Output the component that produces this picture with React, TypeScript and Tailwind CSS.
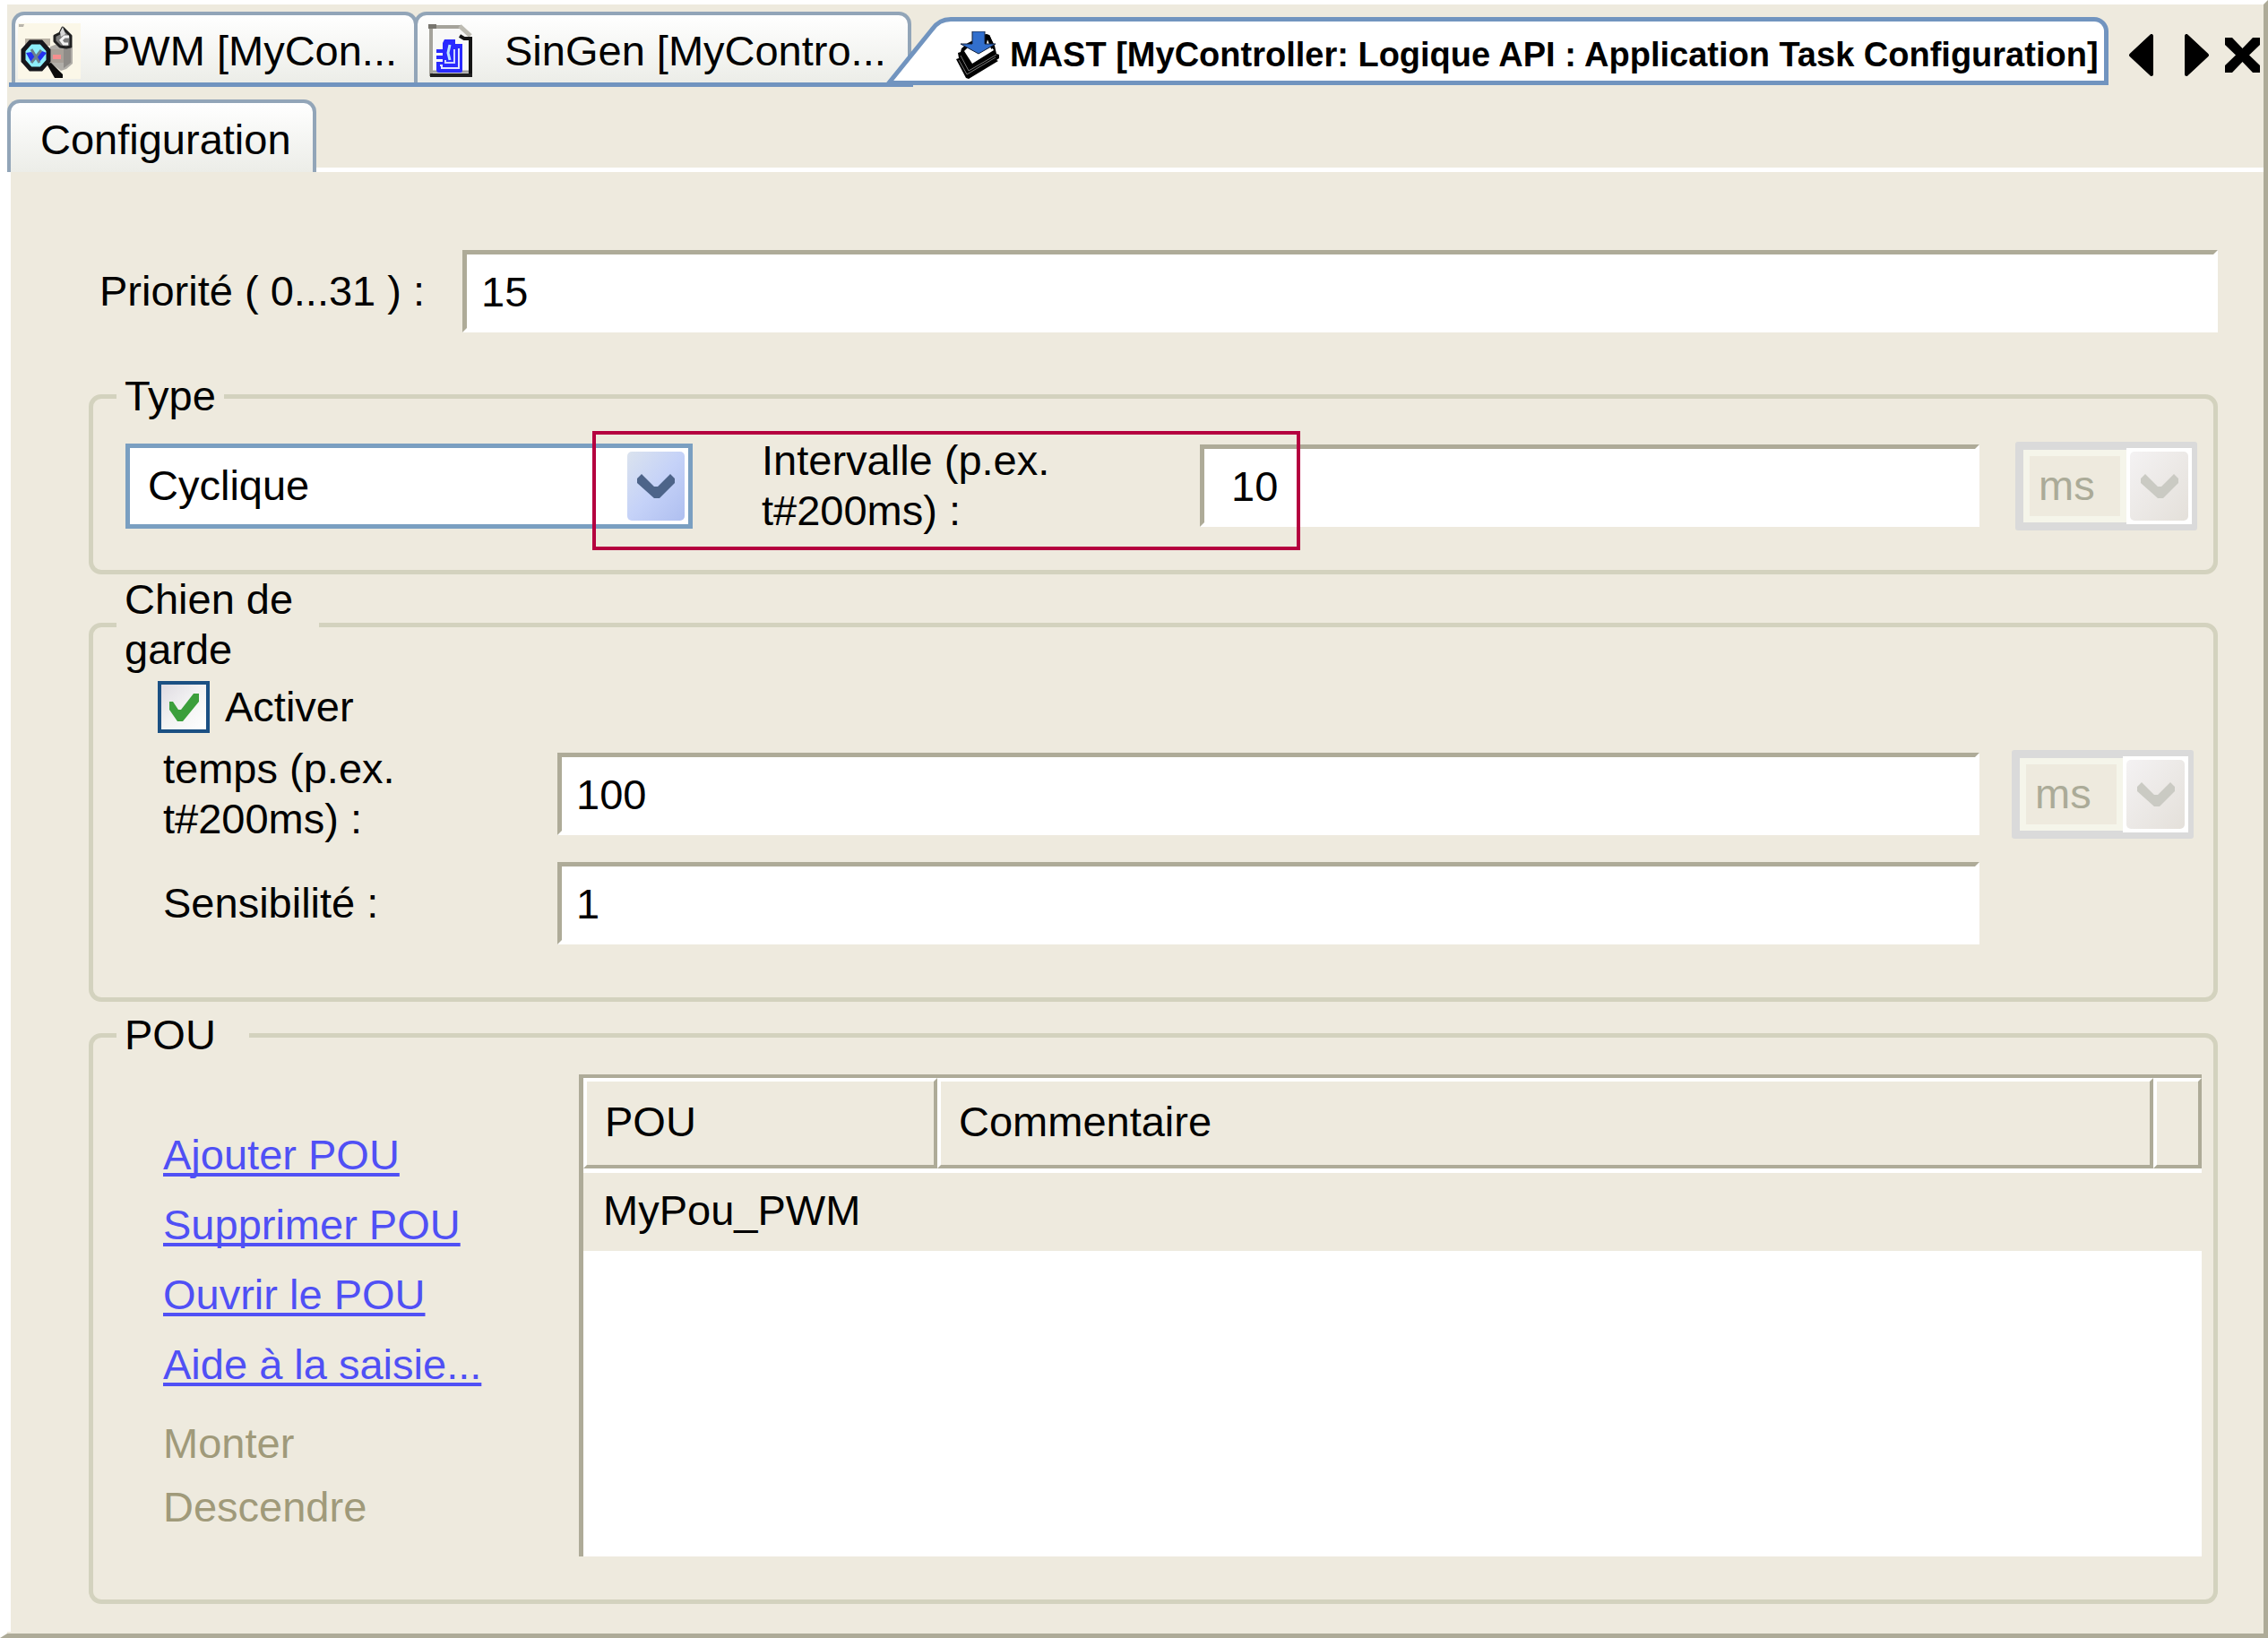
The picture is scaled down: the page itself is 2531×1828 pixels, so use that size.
import { ReactNode, useState } from 'react';

const actions = ['Ajouter POU', 'Supprimer POU', 'Ouvrir le POU', 'Aide à la saisie...'];
const disabledActions = ['Monter', 'Descendre'];
const pous = [{ name: 'MyPou_PWM', comment: '' }];

const fieldClass =
  'h-[92px] min-w-0 border-[5px] border-t-[#aeab98] border-l-[#aeab98] border-r-white border-b-white bg-white outline-none';

function VisualizationIcon() {
  return (
    <svg width="70" height="62" viewBox="0 0 70 62" aria-hidden="true">
      <rect width="70" height="62" fill="#fbf7e8" />
      <path d="M1 1h6l-1 3H1z" fill="#b9b5ac" />
      <path d="M8 17h28v8H8z" fill="#bab3a6" />
      <path d="M36 26l8-3h15l2 4v18l-7 6-6 2-12-9z" fill="#b1aea8" />
      <path d="M51 28l8-2v18l-8 6z" fill="#8f8c88" />
      <path d="M37 29h14v15H37z" fill="#a8a098" />
      <path d="M39 35h9v5h-9z" fill="#f78f8f" />
      <path d="M50 5l9 9v12l-5 1-7-1-6-6v-6l6-3z" fill="#7d7d7d" stroke="#202020" strokeWidth="3" strokeLinejoin="round" />
      <path d="M50 4l3 8-5 3-1-5z" fill="#d8d8d8" />
      <path d="M57 15h-5l-4 4 3 4h5" fill="none" stroke="#f3f3f3" strokeWidth="3" />
      <path d="M14 21h12l8 9v12l-8 9H14l-8-9V30z" fill="#8deefb" stroke="#16161c" strokeWidth="5" />
      <path d="M9 33l6-1 5 5 7-6 5 2-8 10-3-4-6 5z" fill="#2431f0" />
      <path d="M15 29l9 15M26 30L15 44" stroke="#6b7f8c" strokeWidth="3" />
      <path d="M32 45l5-1 13 13v4h-9z" fill="#0c0c0c" />
    </svg>
  );
}

function FunctionBlockIcon() {
  return (
    <svg width="51" height="61" viewBox="0 0 51 61" aria-hidden="true">
      <path d="M2 2h34l13 13v44H2z" fill="#f8f8f7" />
      <path d="M3 59V4h33" fill="none" stroke="#a5a39b" strokeWidth="4" />
      <path d="M0 1h9v5H0z" fill="#77756e" />
      <path d="M35 3l12 11" stroke="#bdbbb2" strokeWidth="5" />
      <path d="M35 14l5 3h7v41" fill="none" stroke="#151515" strokeWidth="4" />
      <path d="M2 58h47" stroke="#202020" strokeWidth="4" />
      <path d="M5 54h40" stroke="#a0a0a0" strokeWidth="3" />
      <path d="M18 18h12v5h8v30q0 2-2 2H12q-3 0-3-3v-9h7v-3H9v-4h7v-3H9v-4h7v-7z" fill="#2a2aff" />
      <path d="M13 47h2v3h19V28" fill="none" stroke="#dfe4ff" strokeWidth="2" />
      <path d="M19 41v3h10V29" fill="none" stroke="#cfd6ff" strokeWidth="2" />
      <path d="M24 24l-2 9 2 8" fill="none" stroke="#bfe6ff" strokeWidth="3" />
    </svg>
  );
}

function TaskIcon() {
  return (
    <svg width="48" height="53" viewBox="0 0 48 53" aria-hidden="true">
      <path d="M0 31l3-1-1-6 3-1 1-4 7-6 20-10 4 1 6 12 2 9 3 1v4l-3 2 2 1-33 20-3-1z" fill="#000" />
      <path d="M9 22l4-4h20l2-9 7 12-24 15z" fill="#fff" />
      <path d="M33 5l3 1 5 13" fill="none" stroke="#000" strokeWidth="4" />
      <path d="M5 27l9 17 31-18M3 32l9 16 32-19" fill="none" stroke="#777" strokeWidth="1" />
      <path d="M18 0h14v14h12L25 25 5 14h13z" fill="#326fcd" stroke="#14233c" strokeWidth="1" />
    </svg>
  );
}

function Chevron({ className }: { className: string }) {
  return (
    <svg width="42" height="27" viewBox="0 0 42 27" className={className} aria-hidden="true">
      <path d="M5 0l14 14h4L37 0l5 5v5L25 27h-6L0 10V5z" fill="currentColor" />
    </svg>
  );
}

function UnitSelect({ label }: { label: string }) {
  return (
    <div className="relative h-[99px] w-[203px] shrink-0 rounded-[3px] border-[9px] border-[#dadada] bg-[#f5f5ea]">
      <select
        aria-label={label}
        disabled
        className="block h-full w-[115px] appearance-none border-[7px] border-[#f5f5ea] bg-[#eeeade] pb-px pl-[10px] text-[#abab98] opacity-100"
      >
        <option>ms</option>
      </select>
      <span className="pointer-events-none absolute -inset-y-[2px] -right-[3px] flex w-[73px] bg-white p-1">
        <span className="flex flex-1 items-center justify-center rounded-[5px] bg-linear-to-br from-[#f4f2f3] to-[#e4e0da]">
          <Chevron className="text-[#cacac3]" />
        </span>
      </span>
    </div>
  );
}

function Group({ title, legendClass, className, children }: {
  title: string;
  legendClass?: string;
  className: string;
  children: ReactNode;
}) {
  return (
    <fieldset className={`min-w-0 rounded-[14px] border-[5px] border-[#d3d2be] pl-[26px] ${className}`}>
      <legend className={`px-[9px] ${legendClass ?? ''}`}>{title}</legend>
      {children}
    </fieldset>
  );
}

function TabBar() {
  return (
    <nav className="flex h-[106px] items-start pt-2 pr-1 pl-[2px]">
      <div className="flex border-b-[5px] border-[#7194bf] pr-[2px] pl-[3px]">
        <button className="flex h-[79px] w-[453px] items-center gap-6 rounded-t-[14px] border-4 border-b-0 border-[#92a5b8] bg-linear-to-b from-white to-[#ecede8] pt-1 pl-[3px] whitespace-nowrap">
          <VisualizationIcon />
          PWM [MyCon...
        </button>
        <button className="-ml-1 flex h-[79px] w-[555px] items-center gap-[34px] rounded-t-[14px] border-4 border-b-0 border-[#92a5b8] bg-linear-to-b from-white to-[#ecede8] pt-1 pl-3 whitespace-nowrap">
          <FunctionBlockIcon />
          SinGen [MyContro...
        </button>
      </div>
      <button className="relative mt-[6px] -ml-[30px] flex h-[76px] min-w-0 flex-1">
        <svg width="72" height="76" viewBox="0 0 72 76" className="shrink-0" aria-hidden="true">
          <path d="M3 73.500L51 14Q59 2.500 72 2.500V73.500z" fill="#fff" />
          <path d="M72 73.500H3L51 14Q59 2.500 72 2.500" fill="none" stroke="#7194bf" strokeWidth="5" />
        </svg>
        <span className="flex h-full flex-1 items-center gap-3 rounded-tr-[16px] border-[5px] border-l-0 border-[#7194bf] bg-white pt-2 pl-[6px] text-[38px] font-bold whitespace-nowrap">
          <TaskIcon />
          MAST [MyController: Logique API : Application Task Configuration]
        </span>
      </button>
      <div className="flex h-24 items-center pl-[23px]">
        <button aria-label="Onglet précédent" className="mr-[35px]">
          <svg width="27" height="47" viewBox="0 0 27 47">
            <path d="M2 23.500L25 2V45z" stroke="#000" strokeWidth="4" strokeLinejoin="round" />
          </svg>
        </button>
        <button aria-label="Onglet suivant" className="mr-[18px]">
          <svg width="27" height="47" viewBox="0 0 27 47">
            <path d="M25 23.500L2 2V45z" stroke="#000" strokeWidth="4" strokeLinejoin="round" />
          </svg>
        </button>
        <button aria-label="Fermer">
          <svg width="39" height="39" viewBox="0 0 39 39">
            <path d="M0 0h8l11.500 12L31 0h8v8L27 19.500 39 31v8h-8L19.500 27 8 39H0v-8l12-11.500L0 8z" />
          </svg>
        </button>
      </div>
    </nav>
  );
}

export default function App() {
  const [enabled, setEnabled] = useState(true);

  return (
    <div className="min-h-screen border-t-[5px] border-r-[5px] border-b-[5px] border-l-8 border-t-white border-r-[#aeab98] border-b-[#aeab98] border-l-white bg-[#eeeade] font-['Liberation_Sans',Arial,sans-serif] text-[47px] leading-[56px] text-black">
      <TabBar />

      <div className="flex items-end">
        <button className="h-[81px] w-[345px] rounded-t-[14px] border-4 border-b-0 border-[#92a5b8] bg-linear-to-b from-white to-[#ecede8] pt-1 pl-[33px] text-left">
          Configuration
        </button>
        <div className="h-[5px] flex-1 bg-white" />
      </div>

      <main className="border-l-4 border-white pt-[87px] pr-[51px] pb-[31px] pl-[87px]">
        <div className="flex items-center pl-3">
          <label htmlFor="priority" className="w-[405px] shrink-0">Priorité ( 0...31 ) :</label>
          <input id="priority" defaultValue="15" className={`${fieldClass} flex-1 pl-4`} />
        </div>

        <Group title="Type" className="mt-[43px] pt-4 pr-[18px] pb-[38px]">
          <div className="relative ml-[10px] flex items-center">
            <div className="relative mr-[77px] w-[633px] shrink-0">
              <select
                aria-label="Type"
                className="block h-[95px] w-full appearance-none border-[5px] border-[#7a9fc1] bg-white pb-px pl-5 outline-none"
              >
                <option>Cyclique</option>
              </select>
              <span className="pointer-events-none absolute inset-y-[9px] right-[9px] flex w-16 items-center justify-center rounded-[5px] bg-linear-to-br from-[#dbe3ee] via-[#c5d2f8] to-[#afbff0]">
                <Chevron className="text-[#4d6489]" />
              </span>
            </div>
            <label htmlFor="interval" className="w-[489px] shrink-0">
              Intervalle (p.ex.
              <br />
              t#200ms) :
            </label>
            <input id="interval" defaultValue="10" className={`${fieldClass} mr-10 flex-1 pl-[30px]`} />
            <UnitSelect label="Unité de l'intervalle" />
            <div className="pointer-events-none absolute -top-[5px] left-[521px] h-[133px] w-[790px] border-4 border-[#b5003f]" />
          </div>
        </Group>

        <Group title="Chien de garde" legendClass="w-[226px]" className="pt-[7px] pr-[22px] pb-[59px]">
          <div className="mb-3 ml-[46px] flex items-center">
            <span className="relative mr-[17px] size-[58px]">
              <input
                id="watchdog"
                type="checkbox"
                checked={enabled}
                onChange={(e) => setEnabled(e.target.checked)}
                className="block size-full appearance-none border-4 border-[#1b5083] bg-linear-to-br from-[#dfdbe2] via-[#f3f3f3] to-white"
              />
              {enabled && (
                <svg viewBox="0 0 58 58" className="pointer-events-none absolute inset-0" aria-hidden="true">
                  <path d="M13 23h4l6 9h3L40 14h6v9L28 45h-6l-9-13z" fill="#3c9f3c" />
                </svg>
              )}
            </span>
            <label htmlFor="watchdog">Activer</label>
          </div>
          <div className="ml-[52px] grid grid-cols-[440px_1fr_239px] items-center gap-y-5">
            <label htmlFor="time">
              temps (p.ex.
              <br />
              t#200ms) :
            </label>
            <input id="time" defaultValue="100" className={`${fieldClass} pl-4`} />
            <div className="pl-9">
              <UnitSelect label="Unité du temps" />
            </div>
            <label htmlFor="sensitivity">Sensibilité :</label>
            <input id="sensitivity" defaultValue="1" className={`${fieldClass} pl-4`} />
          </div>
        </Group>

        <Group title="POU" legendClass="w-[148px]" className="mt-[9px] pt-4 pr-[13px] pb-12">
          <div className="flex">
            <div className="w-[516px] shrink-0 pt-[62px] pl-[52px]">
              <ul className="flex flex-col gap-[22px]">
                {actions.map((action) => (
                  <li key={action}>
                    <a
                      href="#"
                      className="text-[#5050f5] underline decoration-4 underline-offset-4 [text-decoration-skip-ink:none]"
                    >
                      {action}
                    </a>
                  </li>
                ))}
              </ul>
              <div className="mt-8 flex flex-col items-start gap-[15px]">
                {disabledActions.map((action) => (
                  <button key={action} disabled className="text-[#a09a7a]">
                    {action}
                  </button>
                ))}
              </div>
            </div>

            <div className="h-[538px] flex-1 border-t-4 border-l-[5px] border-[#aeab98] bg-white">
              <table className="w-full table-fixed border-separate border-spacing-0 text-left">
                <colgroup>
                  <col className="w-[395px]" />
                  <col />
                  <col className="w-[54px]" />
                </colgroup>
                <thead className="bg-[#eeeade]">
                  <tr className="h-[101px]">
                    <th className="border-4 border-t-white border-r-[#aeab98] border-b-[#aeab98] border-l-white pb-1 pl-5 font-normal">POU</th>
                    <th className="border-4 border-t-white border-r-[#aeab98] border-b-[#aeab98] border-l-white pb-1 pl-5 font-normal">Commentaire</th>
                    <td className="border-4 border-t-white border-r-[#aeab98] border-b-[#aeab98] border-l-white" />
                  </tr>
                </thead>
                <tbody className="bg-[#eeeade]">
                  {pous.map((pou) => (
                    <tr key={pou.name} className="h-[92px]">
                      <td className="border-t-[5px] border-white pb-1 pl-[22px]">{pou.name}</td>
                      <td className="border-t-[5px] border-white pb-1 pl-[22px]">{pou.comment}</td>
                      <td className="border-t-[5px] border-white" />
                    </tr>
                  ))}
                </tbody>
              </table>
            </div>
          </div>
        </Group>
      </main>
    </div>
  );
}
